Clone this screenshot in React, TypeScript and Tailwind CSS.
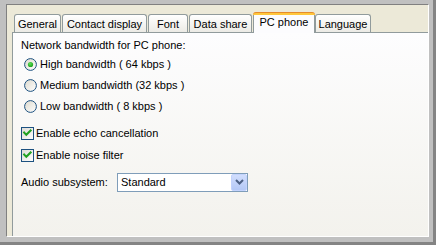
import React from "react";

function Radio({ checked }: { checked?: boolean }) {
  return (
    <svg width="13" height="13" viewBox="0 0 13 13" className="shrink-0">
      <defs>
        <linearGradient id={checked ? "rgA" : "rgB"} x1="0" y1="0" x2="1" y2="1">
          <stop offset="0" stopColor="#dcd9cd" />
          <stop offset="1" stopColor="#ffffff" />
        </linearGradient>
        <radialGradient id={checked ? "dotA" : "dotB"} cx="0.4" cy="0.35" r="0.7">
          <stop offset="0" stopColor="#5ee05a" />
          <stop offset="1" stopColor="#1a9e1a" />
        </radialGradient>
      </defs>
      <circle cx="6.5" cy="6.5" r="5.9" fill={`url(#${checked ? "rgA" : "rgB"})`} stroke="#1c5180" strokeWidth="1" />
      {checked && <circle cx="6.5" cy="6.5" r="2.6" fill={`url(#dotA)`} />}
    </svg>
  );
}

function Check() {
  return (
    <svg width="13" height="13" viewBox="0 0 13 13" className="shrink-0">
      <defs>
        <linearGradient id="cbg" x1="0" y1="0" x2="1" y2="1">
          <stop offset="0" stopColor="#dcdad5" />
          <stop offset="1" stopColor="#ffffff" />
        </linearGradient>
      </defs>
      <rect x="0.5" y="0.5" width="12" height="12" fill="url(#cbg)" stroke="#1c5180" />
      <path d="M3.2 5.6 L5.3 7.8 L9.6 3.4" fill="none" stroke="#21a121" strokeWidth="2.1" strokeLinecap="square" />
    </svg>
  );
}

function Tab({ label, w }: { label: string; w: string }) {
  return (
    <div
      className={`${w} h-[18px] border border-b-0 border-[#919b9c] rounded-t-[3px] bg-gradient-to-b from-[#ffffff] to-[#ecebe5] flex items-center justify-center`}
    >
      <span className="leading-[13px] pt-px">{label}</span>
    </div>
  );
}

export default function App() {
  return (
    <div className="w-[436px] h-[245px] bg-[#c0c0c0] border-r-[3px] border-b-[3px] border-[#848484] pl-[6px] pt-[4px] pr-[4px] pb-[5px] font-['Liberation_Sans','Arial',sans-serif] text-[11px] leading-[13px] text-black">
      <div className="w-full h-full bg-[#ece9d8] border-l border-t border-[#808080] border-r border-r-white border-b border-b-white flex flex-col pl-[5px]">
        {/* tab row */}
        <div className="h-[27px] flex items-end pl-[2px] gap-[1px]">
          <Tab label="General" w="w-[47px]" />
          <Tab label="Contact display" w="w-[85px]" />
          <Tab label="Font" w="w-[40px]" />
          <Tab label="Data share" w="w-[63px]" />
          <div className="w-[62px] h-[21px] -mb-px relative z-10 flex flex-col">
            <div className="h-[3px] rounded-t-[3px] bg-[#ffc73c] border-t border-[#e68b2c]" />
            <div className="flex-1 border-x border-[#919b9c] bg-[#fcfcfe] flex items-start justify-center">
              <span className="leading-[13px] pt-[1px]">PC phone</span>
            </div>
          </div>
          <div className="-ml-px">
            <Tab label="Language" w="w-[56px]" />
          </div>
        </div>
        {/* panel */}
        <div className="flex-1 border-l border-t border-[#919b9c] bg-gradient-to-b from-[#fdfdfe] to-[#f3f2ed] flex flex-col pl-[8px]">
          <div className="mt-[3px] h-[18px] flex items-center">Network bandwidth for PC phone:</div>
          <div className="h-[21px] flex items-center pl-[3px] gap-[3px]">
            <Radio checked />
            <span>High bandwidth ( 64 kbps )</span>
          </div>
          <div className="h-[21px] flex items-center pl-[3px] gap-[3px]">
            <Radio />
            <span>Medium bandwidth (32 kbps )</span>
          </div>
          <div className="h-[20px] flex items-center pl-[3px] gap-[3px]">
            <Radio />
            <span>Low bandwidth ( 8 kbps )</span>
          </div>
          <div className="mt-[6px] h-[22px] flex items-center gap-[2px]">
            <Check />
            <span>Enable echo cancellation</span>
          </div>
          <div className="h-[22px] flex items-center gap-[2px]">
            <Check />
            <span>Enable noise filter</span>
          </div>
          <div className="mt-[6px] h-[20px] flex items-center">
            <span className="w-[96px]">Audio subsystem:</span>
            <div className="w-[131px] h-[19px] border border-[#7f9db9] bg-white flex items-center">
              <span className="flex-1 pl-[3px]">Standard</span>
              <div className="w-[16px] h-[17px] rounded-[2px] border border-[#c3d3fd] bg-gradient-to-b from-[#d1defd] to-[#b4c8f6] flex items-center justify-center">
                <svg width="9" height="6" viewBox="0 0 9 6">
                  <path d="M1 1 L4.5 4.5 L8 1" fill="none" stroke="#4d6185" strokeWidth="2" />
                </svg>
              </div>
            </div>
          </div>
        </div>
      </div>
    </div>
  );
}
